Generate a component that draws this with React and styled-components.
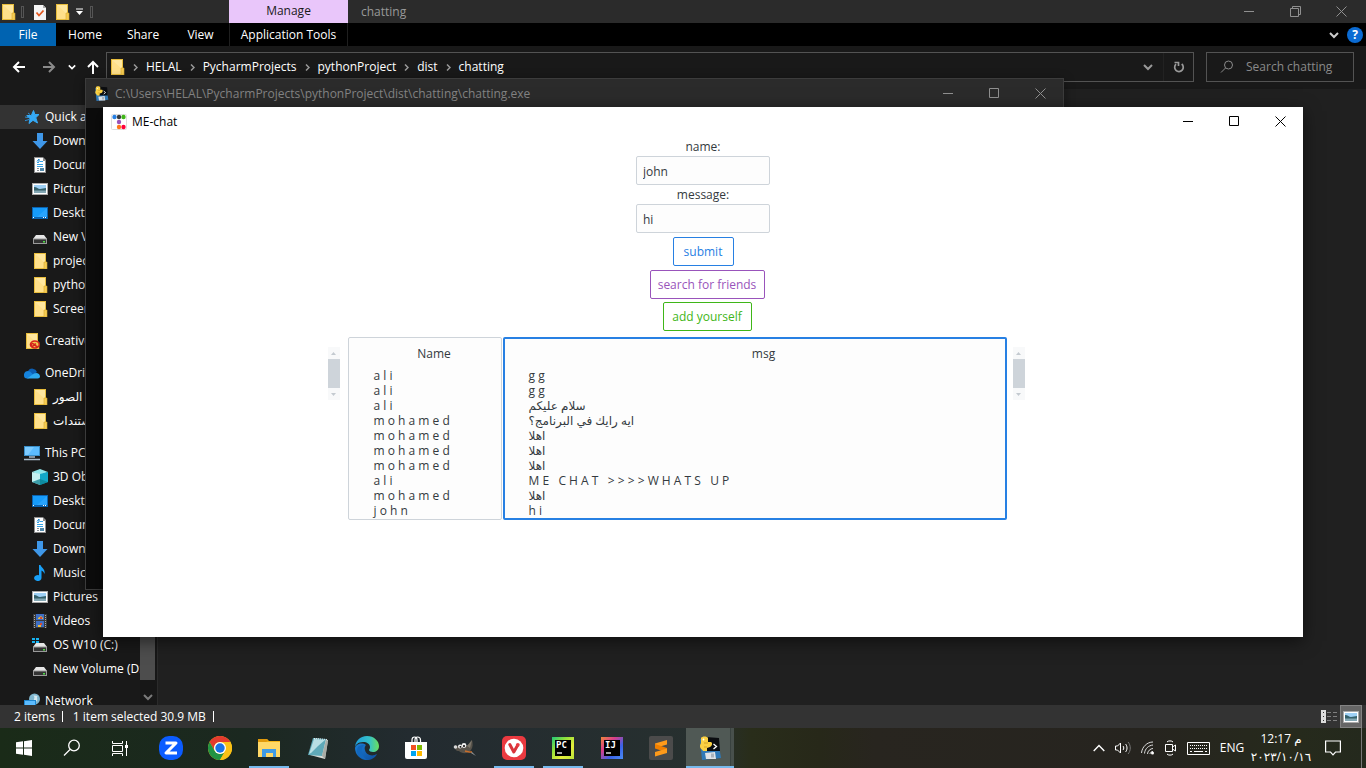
import React from "react";
import styled, { createGlobalStyle, css } from "styled-components";

const GlobalStyle = createGlobalStyle`
  *, *::before, *::after { box-sizing: border-box; }
  body { margin: 0; background: #202020; }
  body, button, input, table {
    font-family: "Open Sans", "Noto Sans", "DejaVu Sans", sans-serif;
    font-size: 12px;
    line-height: 16px;
  }
  button { margin: 0; padding: 0; border: 0; background: none; color: inherit; }
  svg { display: block; flex: none; }
`;

/* ---------- desktop ---------- */
const Desktop = styled.div`
  position: relative;
  display: flex;
  flex-direction: column;
  height: 100vh;
  overflow: hidden;
  color: #fff;
`;

/* ---------- shared window parts ---------- */
const CaptionButtons = styled.div`
  display: flex;
  align-self: stretch;
  margin-left: auto;
  padding-right: ${(p) => p.$inset || 0}px;
  color: ${(p) => p.$tone};
`;
const CaptionButton = styled.button`
  display: flex;
  align-items: center;
  justify-content: center;
  width: 46px;
`;

function Captions({ tone, inset, restore }) {
  return (
    <CaptionButtons $tone={tone} $inset={inset}>
      <CaptionButton aria-label="Minimize">
        <svg width="11" height="11" stroke="currentColor" fill="none"><path d="M0 5.5h10" /></svg>
      </CaptionButton>
      <CaptionButton aria-label={restore ? "Restore" : "Maximize"}>
        <svg width="11" height="11" stroke="currentColor" fill="none">
          {restore ? <path d="M.5 2.5h8v8h-8zM2.5 2.5v-2h8v8h-2" /> : <path d="M.5.5h9v9h-9z" />}
        </svg>
      </CaptionButton>
      <CaptionButton aria-label="Close">
        <svg width="11" height="11" stroke="currentColor" fill="none"><path d="M.5.5l10 10M10.5.5l-10 10" /></svg>
      </CaptionButton>
    </CaptionButtons>
  );
}

/* ---------- explorer ---------- */
const Explorer = styled.main`
  display: flex;
  flex: 1;
  flex-direction: column;
  min-height: 0;
`;
const TitleBar = styled.header`
  display: flex;
  align-items: center;
  height: 23px;
  background: #2b2b2b;
  color: #999;
`;
const QuickTools = styled.div`
  display: flex;
  align-items: center;
  gap: 5px;
  width: 229px;
`;
const ToolDivider = styled.span`
  width: 3px;
  height: 12px;
  border: 1px solid #555;
`;
const ManageTab = styled.div`
  width: 119px;
  height: 23px;
  margin-right: 13px;
  line-height: 21px;
  text-align: center;
  background: #e9c6fa;
  color: #1a1a1a;
`;
const Ribbon = styled.nav`
  display: flex;
  height: 23px;
  background: #000;
`;
const RibbonTab = styled.button`
  width: ${(p) => p.$width}px;
  color: #fff;
  ${(p) => p.$file && css`background: #0063b1;`}
  ${(p) => p.$tools && css`border: solid #1f1f1f; border-width: 0 1px;`}
`;
const RibbonEnd = styled.div`
  display: flex;
  align-items: center;
  gap: 8px;
  margin-left: auto;
  padding-right: 3px;
  color: #ccc;
`;
const Help = styled.button`
  width: 16px;
  height: 16px;
  border-radius: 50%;
  background: #0b6bd3;
  color: #fff;
  font-weight: 700;
`;
const AddressRow = styled.div`
  display: flex;
  align-items: flex-start;
  gap: 12px;
  height: 43px;
  padding: 6px 12px 0;
  background: #191919;
`;
const NavButtons = styled.div`
  display: flex;
  align-items: center;
  gap: 10px;
  width: 82px;
  height: 30px;
`;
const NavButton = styled.button`
  display: flex;
  color: ${(p) => (p.$dim ? "#8a8a8a" : "#fff")};
`;
const AddressBox = styled.div`
  display: flex;
  flex: 1;
  align-items: center;
  height: 30px;
  padding-left: 2px;
  border: 1px solid #535353;
`;
const Crumb = styled.button`
  color: #fff;
`;
const CrumbArrow = styled.span`
  display: flex;
  justify-content: center;
  width: 21px;
  color: #999;
`;
const AddressActions = styled.div`
  display: flex;
  align-self: stretch;
  align-items: center;
  margin-left: auto;
  color: #999;
`;
const AddressAction = styled.button`
  display: flex;
  align-items: center;
  justify-content: center;
  width: 30px;
  height: 28px;
  ${(p) => p.$divided && css`border-left: 1px solid #222;`}
`;
const SearchBox = styled.label`
  display: flex;
  align-items: center;
  gap: 12px;
  width: 148px;
  height: 30px;
  padding: 0 4px 0 13px;
  border: 1px solid #535353;
  color: #8a8a8a;
`;
const SearchInput = styled.input`
  flex: 1;
  min-width: 0;
  padding: 0;
  border: 0;
  outline: 0;
  background: transparent;
  &::placeholder { color: #8a8a8a; opacity: 1; }
`;
const ExplorerBody = styled.div`
  display: flex;
  flex: 1;
  min-height: 0;
  background: #202020;
`;
const Sidebar = styled.nav`
  display: flex;
  width: 158px;
  overflow: hidden;
  border-right: 1px solid #2b2b2b;
  background: #191919;
`;
const Tree = styled.div`
  display: flex;
  flex: 1;
  flex-direction: column;
  gap: 8px;
  min-width: 0;
  padding-top: 16px;
  overflow: hidden;
`;
const TreeGroup = styled.div`
  display: flex;
  flex-direction: column;
`;
const TreeItem = styled.a`
  display: flex;
  align-items: center;
  gap: 5px;
  height: 24px;
  padding-left: ${(p) => (p.$nested ? 32 : 24)}px;
  color: #fff;
  text-decoration: none;
  white-space: nowrap;
  ${(p) => p.$active && css`background: #333;`}
`;
const SideScroll = styled.div`
  display: flex;
  flex-direction: column;
  align-items: center;
  width: 17px;
  padding: 16px 2px 3px 0;
  background: #171717;
  color: #7a7a7a;
`;
const SideThumb = styled.div`
  flex: 1;
  width: 15px;
  margin-bottom: 12px;
  background: #4d4d4d;
`;
const StatusBar = styled.footer`
  display: flex;
  align-items: center;
  height: 23px;
  padding: 0 4px 0 14px;
  background: #333;
`;
const StatusText = styled.span`
  padding-right: ${(p) => p.$after}px;
`;
const StatusDivider = styled.span`
  width: 1px;
  height: 11px;
  margin-right: 10px;
  background: #fff;
`;
const ViewModes = styled.div`
  display: flex;
  align-items: center;
  align-self: stretch;
  gap: 3px;
  margin-left: auto;
`;
const ViewMode = styled.button`
  display: flex;
  align-items: center;
  justify-content: center;
  height: 23px;
  ${(p) => p.$on && css`width: 22px; border: 1px solid #838383; background: #666;`}
`;

/* ---------- icons ---------- */
const Folder = ({ badge }) => (
  <svg width="16" height="16" viewBox="0 0 16 16">
    <path d="M2 0h12v16H2z" fill="#e8bd3c" />
    <path d="M3 1h10v14H3z" fill="#ffe08a" />
    <path d="M3 1l10 9V1z" fill="#ffe79f" />
    <path d="M12 9h3v7h-3z" fill="#f5cc53" stroke="#d9a92b" strokeWidth=".6" />
    {badge && (
      <g fill="none" stroke="#d8221c" strokeWidth="1.5">
        <ellipse cx="10.8" cy="11.5" rx="4.4" ry="3.5" fill="#f0c94f" />
        <path d="M13.8 13.4c-3 .8-3.400-3.600-5.700-2.900-1.800.8-.8 3.300.8 2.500l3-2.300" />
      </g>
    )}
  </svg>
);
const Star = () => (
  <svg width="16" height="16" viewBox="0 0 16 16">
    <path d="M9.500 1.500l1.400 4H15l-3.200 3.200L13.500 14l-4.500-2.700L5 14.500l1-4.700-3.200-3.300h4.500z" fill="#35a9f5" stroke="#35a9f5" strokeLinejoin="round" />
    <path d="M4 8.500L1 8M5 10.500l-4 1.200M6 5.500L4 4" stroke="#2b8fd6" />
  </svg>
);
const Download = () => (
  <svg width="16" height="16" viewBox="0 0 16 16"><path d="M5 0h6v8h4.500L8 16 .5 8H5z" fill="#3f97e8" /></svg>
);
const DocumentIcon = () => (
  <svg width="16" height="16" viewBox="0 0 16 16">
    <path d="M2 0h9l3 3v13H2z" fill="#8f8f8f" />
    <path d="M3 1h8v3h2v11H3z" fill="#fff" />
    <path d="M5 5.500h2M8 4.500h3M5 7.500h6M5 9.500h6" stroke="#36a3e6" />
    <path d="M5 11.500h2M5 13.500h2" stroke="#8a8f94" />
    <path d="M5 4.500L7 2v3" stroke="#1787d4" fill="none" />
    <path d="M8 11h4v3H8z" fill="#5187a8" />
  </svg>
);
const Picture = () => (
  <svg width="16" height="16" viewBox="0 0 16 16">
    <path d="M0 2h16v12H0z" fill="#a9a9a9" />
    <path d="M1 3h14v10H1z" fill="#fff" />
    <path d="M2 4h12v8H2z" fill="#9ed0f5" />
    <path d="M2 6c3 0 4 2 6 2s4-1 6-1v3H2z" fill="#35616b" />
    <path d="M2 9.500h12V12H2z" fill="#84a8b4" />
  </svg>
);
const DesktopIcon = () => (
  <svg width="16" height="16" viewBox="0 0 16 16">
    <path d="M0 2h16v12H0z" fill="#0a63b0" />
    <path d="M1 3h14v9H1z" fill="#169bfa" />
    <path d="M15 3v9H5z" fill="#3baeff" opacity=".5" />
    <path d="M1 12.500h1M11 12.500h1M13 12.500h1" stroke="#fff" />
  </svg>
);
const Drive = ({ windows }) => (
  <svg width="16" height="16" viewBox="0 0 16 16">
    <path d="M4 6h8l3 4H1z" fill="#e6e6e6" />
    <path d="M1 9.500h14V15H1z" fill="#9a9a9a" />
    <path d="M2 10.500h12V14H2z" fill="#333" />
    <path d="M11 12h2v1.500h-2z" fill="#4fdc46" />
    {windows && <path d="M0 1h3v2H0zM4 1h3v2H4zM0 4h3v2H0zM4 4h3v2H4z" fill="#16b2f0" />}
  </svg>
);
const Cloud = () => (
  <svg width="16" height="16" viewBox="0 0 16 16">
    <path d="M4 6a5 5 0 0 1 9 1l-6 5z" fill="#0c5fb4" />
    <path d="M0 10.500a4 4 0 0 1 6-4l4 4-6 3H3a3 3 0 0 1-3-3z" fill="#1583dd" />
    <path d="M3 13.500l7-5a4 4 0 0 1 6 2.500 2.500 2.500 0 0 1-2.500 2.500z" fill="#2eaaf0" />
  </svg>
);
const PcIcon = () => (
  <svg width="16" height="16" viewBox="0 0 16 16">
    <path d="M0 1h16v10H0z" fill="#3a8fc9" />
    <path d="M1 2h14v8H1z" fill="#5cbcff" />
    <path d="M1 2h9l-6 8H1z" fill="#7dcbff" />
    <path d="M5 12h6M0 14.500h16" stroke="#a9bccb" strokeWidth="1.500" />
  </svg>
);
const Cube = () => (
  <svg width="16" height="16" viewBox="0 0 16 16">
    <path d="M8 0l8 3-8 3-8-3z" fill="#8fe6ea" />
    <path d="M0 3l8 2v11l-8-3z" fill="#c4f0f0" />
    <path d="M8 5l8-2v10l-8 3z" fill="#12a8c8" />
    <path d="M0 13l8-3 8 3-8 3z" fill="#0d8292" opacity=".75" />
  </svg>
);
const Note = () => (
  <svg width="16" height="16" viewBox="0 0 16 16">
    <path d="M7 0h1.500c1 3 5 4 4 9-.5-2-2-3-3-3.500V13A3.700 3 0 1 1 7 10.200z" fill="#18a0f8" />
  </svg>
);
const Film = () => (
  <svg width="16" height="16" viewBox="0 0 16 16">
    <path d="M1 1h14v14H1z" fill="#3a3a3a" />
    <path d="M4 1h8v6H4zM4 8h8v6H4z" fill="#3f6fc4" />
    <path d="M6 5l3-2 2 2v1H6zM6 12h3v2H6z" fill="#e6b93c" />
    <path d="M8 4h2v2H8zM8 10h2v2H8z" fill="#d84932" />
    <path d="M2.500 2v13M13.500 2v13" stroke="#aaa" strokeDasharray="1 1" />
  </svg>
);
const NetworkIcon = () => (
  <svg width="16" height="16" viewBox="0 0 16 16">
    <circle cx="10.500" cy="6" r="5.500" fill="#7fb6cf" />
    <path d="M7 2c3 0 4 2 3 4s2 3 3 2-1-5 1-5" fill="#d5e8ef" />
    <path d="M0 7h12v8H0z" fill="#1d86d0" />
    <path d="M1 8h10v6H1z" fill="#5cbcff" />
  </svg>
);
const ChevronDown = ({ size = 10, width = 2 }) => (
  <svg width={size} height={size} viewBox="0 0 10 10" fill="none" stroke="currentColor" strokeWidth={width}>
    <path d="M1 3l4 4 4-4" />
  </svg>
);
const PythonDisk = ({ size }) => (
  <svg width={size} height={size} viewBox="0 0 22 24">
    <path d="M1 3l18 1 3 18-19 2z" fill="#2f79b8" />
    <path d="M7 1l13 1 1 13H7z" fill="#0b0d10" />
    <path d="M6 17l10-1 1 7H7z" fill="#dfe3e8" />
    <path d="M12 17.500h3v4h-3z" fill="#aab3bd" />
    <path d="M14.500 8l3 2.500-3 2.500" stroke="#fff" strokeWidth="1.300" fill="none" />
    <path d="M2 2c1-2 6-2 7 0v4h3c2 1 1 4-1 5l-3 1v3H4c-1-2-3-2-3-5 0-2 1-2 1-3z" fill="#fbd143" />
    <path d="M5 7h4M5 11h3" stroke="#c9971c" strokeWidth=".8" />
    <circle cx="4.500" cy="3.500" r=".9" fill="#fff" />
  </svg>
);

const TREE = [
  [["Quick access", Star], ["Downloads", Download], ["Documents", DocumentIcon], ["Pictures", Picture],
    ["Desktop", DesktopIcon], ["New Volume", Drive], ["projects", Folder], ["python", Folder], ["Screenshots", Folder]],
  [["Creative Cloud", (p) => <Folder badge {...p} />]],
  [["OneDrive", Cloud], ["الصور", Folder], ["المستندات", Folder]],
  [["This PC", PcIcon], ["3D Objects", Cube], ["Desktop", DesktopIcon], ["Documents", DocumentIcon],
    ["Downloads", Download], ["Music", Note], ["Pictures", Picture], ["Videos", Film],
    ["OS W10 (C:)", (p) => <Drive windows {...p} />], ["New Volume (D:)", Drive]],
  [["Network", NetworkIcon]],
];
const PATH = ["HELAL", "PycharmProjects", "pythonProject", "dist", "chatting"];

/* ---------- floating windows ---------- */
const ConsoleWindow = styled.section`
  position: absolute;
  inset: 78px 302px 178px 85px;
  border: 1px solid #3c3c3c;
  background: #0c0c0c;
  box-shadow: 0 2px 10px rgba(0, 0, 0, 0.4);
`;
const ConsoleTitle = styled.header`
  display: flex;
  align-items: center;
  gap: 6px;
  height: 29px;
  padding-left: 8px;
  background: #2b2b2b;
  color: #838383;
`;
const ChatWindow = styled.section`
  position: absolute;
  inset: 107px 63px 131px 103px;
  display: flex;
  flex-direction: column;
  background: #fff;
  color: #343a40;
  box-shadow: 0 4px 16px rgba(0, 0, 0, 0.55);
`;
const ChatTitle = styled.header`
  display: flex;
  align-items: center;
  gap: 5px;
  height: 29px;
  padding-left: 8px;
  color: #000;
`;
const ChatForm = styled.form`
  display: flex;
  flex-direction: column;
  align-items: center;
  padding-top: 1px;
`;
const FieldLabel = styled.label`
  line-height: 19px;
`;
const Field = styled.input`
  width: 134px;
  height: 29px;
  padding: 1px 6px 0;
  border: 1px solid #ced4da;
  border-radius: 2px;
  background: #fdfdfd;
  color: #343a40;
`;
const Actions = styled.div`
  display: flex;
  flex-direction: column;
  align-items: center;
  gap: 3px;
  padding: ${(p) => (p.$shifted ? "4px 0 6px 8px" : "4px 0 0")};
`;
const ActionButton = styled.button`
  width: ${(p) => p.$width}px;
  height: 29px;
  padding-top: 1px;
  border: 1px solid ${(p) => p.$tone};
  border-radius: 2px;
  color: ${(p) => p.$tone};
`;
const Log = styled.div`
  display: flex;
  align-items: flex-start;
  justify-content: center;
  padding-right: 54px;
`;
const LogPanel = styled.div`
  width: ${(p) => p.$width}px;
  height: 183px;
  margin-right: ${(p) => p.$after}px;
  padding: ${(p) => (p.$focused ? "6px 0 0 18px" : "7px 0 0 19px")};
  overflow: hidden;
  border: ${(p) => (p.$focused ? "2px solid #2780e3" : "1px solid #ced4da")};
  border-radius: 2px;
  background: #fdfdfd;
`;
const LogTable = styled.table`
  width: 100%;
  border-collapse: collapse;
  th { height: 23px; padding: 0; font-weight: 400; line-height: 18px; vertical-align: top; }
  td { height: 15px; padding: 0 0 0 6px; line-height: 15px; white-space: pre; }
`;
const MiniScroll = styled.div`
  display: flex;
  flex-direction: column;
  width: 12px;
  margin: 10px ${(p) => p.$after}px 0 0;
  background: #f8f9fa;
`;
const MiniArrow = styled.button`
  display: flex;
  align-items: center;
  justify-content: center;
  height: 12px;
`;
const MiniThumb = styled.div`
  height: 29px;
  background: #ced4da;
`;

function Scroller({ after }) {
  return (
    <MiniScroll $after={after}>
      <MiniArrow type="button" aria-label="Scroll up"><svg width="5" height="3"><path d="M0 3L2.500 0 5 3z" fill="#c4cad0" /></svg></MiniArrow>
      <MiniThumb />
      <MiniArrow type="button" aria-label="Scroll down"><svg width="5" height="3"><path d="M0 0h5L2.500 3z" fill="#c4cad0" /></svg></MiniArrow>
    </MiniScroll>
  );
}

const NAMES = ["a l i", "a l i", "a l i", "m o h a m e d", "m o h a m e d", "m o h a m e d", "m o h a m e d", "a l i", "m o h a m e d", "j o h n"];
const MESSAGES = ["g g", "g g", "سلام عليكم", "ايه رايك في البرنامج؟", "اهلا", "اهلا", "اهلا", "M E   C H A T   > > > > W H A T S   U P", "اهلا", "h i"];

function LogColumn({ title, rows, ...panel }) {
  return (
    <LogPanel {...panel}>
      <LogTable>
        <thead><tr><th scope="col">{title}</th></tr></thead>
        <tbody>{rows.map((row, i) => <tr key={i}><td><bdi>{row}</bdi></td></tr>)}</tbody>
      </LogTable>
    </LogPanel>
  );
}

/* ---------- taskbar ---------- */
const Taskbar = styled.footer`
  display: flex;
  height: 40px;
  background: linear-gradient(90deg, #1a2b18 0%, #1b2820 18%, #232b30 30%, #27302f 52%, #292d1a 55%, #272819 60%, #28251f 64%, #26241f 84%, #262a1c 95%, #24291d 100%);
`;
const SystemButtons = styled.div`
  display: flex;
  padding-right: 3px;
`;
const Apps = styled.div`
  display: flex;
  gap: 1px;
`;
const TaskButton = styled.button`
  position: relative;
  display: flex;
  align-items: center;
  justify-content: center;
  width: 48px;
  height: 40px;
  ${(p) => p.$active && css`background: linear-gradient(90deg, #505955 0 44px, #39423f 44px 45px, #48504c 45px);`}
  ${(p) => (p.$open || p.$active) && css`
    &::after {
      content: "";
      position: absolute;
      bottom: 0;
      left: ${p.$active ? 0 : 4}px;
      right: ${p.$active ? 0 : 4}px;
      height: 2px;
      background: #76b9ed;
    }
  `}
`;
const Tray = styled.div`
  display: flex;
  align-items: center;
  margin-left: auto;
  padding-right: 4px;
`;
const TrayButton = styled.button`
  display: flex;
  align-items: center;
  justify-content: center;
  width: ${(p) => p.$width}px;
  height: 40px;
`;
const Clock = styled.button`
  width: 64px;
  line-height: 18px;
  text-align: center;
`;
const ShowDesktop = styled.button`
  width: 1px;
  height: 40px;
  margin-left: 8px;
  background: #777;
`;

const Zoom = () => (
  <svg width="24" height="24" viewBox="0 0 24 24">
    <rect width="24" height="24" rx="10" fill="#0b5cff" />
    <path d="M6.500 7h10.500L7 17h11" fill="none" stroke="#fff" strokeWidth="3" strokeLinejoin="round" />
  </svg>
);
const Chrome = () => (
  <svg width="24" height="24" viewBox="0 0 24 24">
    <circle cx="12" cy="12" r="12" fill="#fbc116" />
    <path d="M1.600 6A12 12 0 0 1 22.400 6H12a6 6 0 0 0-5.200 9z" fill="#e33b2e" />
    <path d="M1.600 6l5.200 9A6 6 0 0 0 12 18l-.8 6A12 12 0 0 1 1.600 6z" fill="#229343" />
    <path d="M6.800 15A6 6 0 0 0 17.200 15L12 24A12 12 0 0 1 4 21z" fill="#229343" />
    <path d="M12 6h10.400A12 12 0 0 1 12 24l5.200-9z" fill="#fbc116" />
    <circle cx="12" cy="12" r="6" fill="#fff" />
    <circle cx="12" cy="12" r="4.700" fill="#1a73e8" />
  </svg>
);
const Files = () => (
  <svg width="22" height="20" viewBox="0 0 22 20">
    <path d="M0 1h9l2 2h11v16H0z" fill="#f5b518" />
    <path d="M0 4h22v15H0z" fill="#ffd867" />
    <path d="M0 1h9l1 2-2 1H0z" fill="#e19a0c" />
    <path d="M4 11h14v8h-3v-4H8v4H4z" fill="#3f9be5" />
  </svg>
);
const Notepad = () => (
  <svg width="24" height="24" viewBox="0 0 24 24">
    <path d="M8 2l14 2-3 19-15-4z" fill="#d9dcd8" />
    <path d="M7 2l13 1-4 17-14-1z" fill="#5fa9b8" />
    <path d="M8 3l11 1-7 6-7 7-2 1z" fill="#b9dfe4" />
    <path d="M16 20l4-16 2 1-3 18z" fill="#a8aca6" />
    <path d="M8 2.500l13 1" stroke="#eee" strokeDasharray="1 1" />
  </svg>
);
const Edge = () => (
  <svg width="24" height="24" viewBox="0 0 24 24">
    <defs>
      <linearGradient id="edgeTop" x1="0" x2="1"><stop offset="0" stopColor="#1f9fdf" /><stop offset=".6" stopColor="#35c1c8" /><stop offset="1" stopColor="#6be05c" /></linearGradient>
      <linearGradient id="edgeLow" x1="0" x2="1" y2="1"><stop offset="0" stopColor="#1b7fd6" /><stop offset="1" stopColor="#0d4c9c" /></linearGradient>
    </defs>
    <path d="M0 12A12 12 0 0 0 12 24c4 0 8-2 10-6-5 3-11 1-12-4-1-3 1-5 1-5C7 6 1 8 0 12z" fill="url(#edgeLow)" />
    <path d="M0 12C0 5 5 0 12 0s12 5 12 10c0 4-3 6-6 6-2 0-4-1-4-2s1-1 1-3c0-3-3-5-7-5-5 0-8 3-8 6z" fill="url(#edgeTop)" />
    <path d="M9 9c-5 6-1 13 4 15C4 24-1 15 4 10c2-1 4-1 5-1z" fill="#1267bd" />
  </svg>
);
const Store = () => (
  <svg width="24" height="24" viewBox="0 0 24 24">
    <path d="M8 7V4c0-2 1-3 2.500-3S13 2 13 4v3M11 6V4c0-2 1-3 2.500-3S16.500 2 16.500 4v3" fill="none" stroke="#fff" strokeWidth="1.200" />
    <path d="M1 6h22v15a2 2 0 0 1-2 2H3a2 2 0 0 1-2-2z" fill="#fff" />
    <path d="M7 9h5v5H7z" fill="#f25022" /><path d="M13 9h5v5h-5z" fill="#7fba00" />
    <path d="M7 15h5v5H7z" fill="#00a4ef" /><path d="M13 15h5v5h-5z" fill="#ffb900" />
  </svg>
);
const Gimp = () => (
  <svg width="24" height="24" viewBox="0 0 24 24">
    <path d="M2 9l4 2 3-3 5 2 5-6c1 4 1 7-1 10-3 4-9 4-12 1-3 0-5-2-4-6z" fill="#57524a" />
    <path d="M14 10l5-6-2 8z" fill="#7d776b" />
    <circle cx="7" cy="10.500" r="2" fill="#eee" /><circle cx="11" cy="9.500" r="2.400" fill="#eee" />
    <circle cx="7.400" cy="10.800" r=".9" /><circle cx="11" cy="10" r="1" />
    <circle cx="2.500" cy="11" r="1.800" fill="#d6d6d6" />
    <path d="M12 15l4 1h3" fill="none" stroke="#c96f2c" strokeWidth="1.500" />
    <path d="M19 16l4 4-5-3z" fill="#999" />
  </svg>
);
const Vivaldi = () => (
  <svg width="24" height="24" viewBox="0 0 24 24">
    <rect width="24" height="24" rx="5" fill="#ea3a40" />
    <circle cx="12" cy="12" r="9.300" fill="#fff" />
    <path d="M7.800 8.500l4 7.500 3.700-6.500" fill="none" stroke="#d9343a" strokeWidth="3" strokeLinecap="round" strokeLinejoin="round" />
    <circle cx="15.800" cy="8.800" r="1.900" fill="#ea3a40" />
  </svg>
);
const JetBrains = ({ id, letters, stops }) => (
  <svg width="22" height="22" viewBox="0 0 22 22">
    <defs>
      <linearGradient id={id} x1="0" y1="0" x2="1" y2="1">
        {stops.map((c, i) => <stop key={c} offset={i / (stops.length - 1)} stopColor={c} />)}
      </linearGradient>
    </defs>
    <path d="M0 0h22v22H0z" fill={`url(#${id})`} />
    <path d="M3 3h16v16H3z" fill="#000" />
    <text x="4" y="11" fill="#fff" fontFamily="DejaVu Sans Mono" fontSize="9" fontWeight="700">{letters}</text>
    <path d="M5 16h5" stroke="#ddd" strokeWidth="1.500" />
  </svg>
);
const Sublime = () => (
  <svg width="24" height="24" viewBox="0 0 24 24">
    <rect width="24" height="24" rx="2" fill="#4b4b4b" />
    <path d="M6 7.500L18 4v4.500L6 12z" fill="#ff9a1a" />
    <path d="M6 8l12 4v4.500L6 12.500z" fill="#f07f00" />
    <path d="M6 16l12-3.500V17L6 20.500z" fill="#ff9a1a" />
  </svg>
);
const APPS = [
  ["Zoom", <Zoom />],
  ["Chrome", <Chrome />],
  ["File Explorer", <Files />, "open"],
  ["Notepad", <Notepad />],
  ["Edge", <Edge />],
  ["Microsoft Store", <Store />],
  ["GIMP", <Gimp />],
  ["Vivaldi", <Vivaldi />, "open"],
  ["PyCharm", <JetBrains id="pc" letters="PC" stops={["#20c77a", "#8fe03b", "#e6ee3b", "#b9e53a"]} />, "open"],
  ["IntelliJ IDEA", <JetBrains id="ij" letters="IJ" stops={["#f0873a", "#d83d8a", "#3a62e8", "#4b8df5"]} />],
  ["Sublime Text", <Sublime />],
  ["Python", <PythonDisk size={24} />, "active"],
];

export default function App() {
  return (
    <Desktop>
      <GlobalStyle />
      <Explorer>
        <TitleBar>
          <QuickTools>
            <Folder />
            <ToolDivider />
            <svg width="20" height="16" viewBox="0 0 20 16">
              <path d="M5 1h9l3 3v12H5z" fill="#f4f4f4" /><path d="M14 1v3h3z" fill="#aaa" />
              <path d="M7.500 8.500l2.500 3 4.500-5" fill="none" stroke="#e2571e" strokeWidth="1.800" />
            </svg>
            <Folder />
            <svg width="10" height="8"><path d="M1 1h7" stroke="#fff" /><path d="M1 3h7L4.500 7z" fill="#fff" /></svg>
            <ToolDivider />
          </QuickTools>
          <ManageTab>Manage</ManageTab>
          <span>chatting</span>
          <Captions tone="#909090" inset={2} restore />
        </TitleBar>
        <Ribbon>
          <RibbonTab $width={56} $file>File</RibbonTab>
          <RibbonTab $width={58}>Home</RibbonTab>
          <RibbonTab $width={58}>Share</RibbonTab>
          <RibbonTab $width={57}>View</RibbonTab>
          <RibbonTab $width={119} $tools>Application Tools</RibbonTab>
          <RibbonEnd><ChevronDown /><Help aria-label="Help">?</Help></RibbonEnd>
        </Ribbon>
        <AddressRow>
          <NavButtons>
            <NavButton aria-label="Back"><svg width="14" height="14" fill="none" stroke="currentColor" strokeWidth="2"><path d="M13 7H2M7 2L2 7l5 5" /></svg></NavButton>
            <NavButton $dim aria-label="Forward"><svg width="22" height="14" fill="none" stroke="currentColor" strokeWidth="2"><path d="M7 7h11M13 2l5 5-5 5" /></svg></NavButton>
            <NavButton aria-label="Recent locations"><ChevronDown size={8} /></NavButton>
            <NavButton aria-label="Up"><svg width="14" height="14" fill="none" stroke="currentColor" strokeWidth="2"><path d="M7 14V2M2 7l5-5 5 5" /></svg></NavButton>
          </NavButtons>
          <AddressBox>
            <Folder />
            {PATH.map((part) => (
              <React.Fragment key={part}>
                <CrumbArrow><svg width="5" height="7" fill="none" stroke="currentColor" strokeWidth="1.500"><path d="M1 .5l3 3-3 3" /></svg></CrumbArrow>
                <Crumb>{part}</Crumb>
              </React.Fragment>
            ))}
            <AddressActions>
              <AddressAction aria-label="Previous locations"><ChevronDown /></AddressAction>
              <AddressAction $divided aria-label="Refresh">
                <svg width="12" height="12" fill="none" stroke="currentColor" strokeWidth="1.700"><path d="M3 3.200A4.300 4.300 0 1 0 8.700 3M1.500 1.500h4v3.500" /></svg>
              </AddressAction>
            </AddressActions>
          </AddressBox>
          <SearchBox>
            <svg width="14" height="14" fill="none" stroke="currentColor"><circle cx="8.500" cy="5" r="4" /><path d="M5.500 8L1 12.500" /></svg>
            <SearchInput aria-label="Search chatting" placeholder="Search chatting" />
          </SearchBox>
        </AddressRow>
        <ExplorerBody>
          <Sidebar>
            <Tree>
              {TREE.map((group, g) => (
                <TreeGroup key={g}>
                  {group.map(([label, Icon], i) => (
                    <TreeItem key={i} href="#" $nested={i > 0} $active={g === 0 && i === 0}><Icon />{label}</TreeItem>
                  ))}
                </TreeGroup>
              ))}
            </Tree>
            <SideScroll><SideThumb /><ChevronDown /></SideScroll>
          </Sidebar>
        </ExplorerBody>
        <StatusBar>
          <StatusText $after={7}>2 items</StatusText>
          <StatusDivider />
          <StatusText $after={3}>1 item selected</StatusText>
          <StatusText $after={7}>30.9 MB</StatusText>
          <StatusDivider />
          <ViewModes>
            <ViewMode aria-label="Details">
              <svg width="16" height="13" fill="none"><path d="M0 0h5v13H0z" fill="#ddd" /><path d="M2 2.500h1M2 6.500h1M2 10.500h1" stroke="#333" /><path d="M6 2.500h4M12 2.500h4M6 6.500h4M12 6.500h4M6 10.500h4M12 10.500h4" stroke="#808080" /></svg>
            </ViewMode>
            <ViewMode $on aria-label="Large icons"><Picture /></ViewMode>
          </ViewModes>
        </StatusBar>
      </Explorer>

      <ConsoleWindow>
        <ConsoleTitle>
          <PythonDisk size={15} />
          <span>C:\Users\HELAL\PycharmProjects\pythonProject\dist\chatting\chatting.exe</span>
          <Captions tone="#909090" />
        </ConsoleTitle>
      </ConsoleWindow>

      <ChatWindow>
        <ChatTitle>
          <svg width="16" height="16" viewBox="0 0 16 16">
            <rect x=".5" y=".5" width="15" height="15" rx="1" fill="#fff" stroke="#ddd" />
            <circle cx="3.500" cy="3" r="2.200" fill="#2780e3" /><circle cx="8" cy="3" r="2.200" fill="#373a3c" />
            <circle cx="12.500" cy="3" r="2.200" fill="#3fb618" /><circle cx="8" cy="8" r="2.200" fill="#9954bb" />
            <circle cx="8" cy="13" r="2.200" fill="#ff7518" /><circle cx="12.500" cy="13" r="2.200" fill="#ff0039" />
          </svg>
          <span>ME-chat</span>
          <Captions tone="#000" />
        </ChatTitle>
        <ChatForm onSubmit={(e) => e.preventDefault()}>
          <FieldLabel htmlFor="name">name:</FieldLabel>
          <Field id="name" defaultValue="john" />
          <FieldLabel htmlFor="message">message:</FieldLabel>
          <Field id="message" defaultValue="hi" />
          <Actions>
            <ActionButton $width={61} $tone="#2780e3">submit</ActionButton>
          </Actions>
          <Actions $shifted>
            <ActionButton type="button" $width={115} $tone="#9954bb">search for friends</ActionButton>
            <ActionButton type="button" $width={89} $tone="#3fb618">add yourself</ActionButton>
          </Actions>
        </ChatForm>
        <Log>
          <Scroller after={8} />
          <LogColumn title="Name" rows={NAMES} $width={154} $after={1} />
          <LogColumn title="msg" rows={MESSAGES} $width={504} $after={6} $focused />
          <Scroller after={0} />
        </Log>
      </ChatWindow>

      <Taskbar>
        <SystemButtons>
          <TaskButton aria-label="Start">
            <svg width="16" height="16"><path d="M0 2.300L7 1.300V7.500H0zM8 1.200L16 0v7.500H8zM0 8.500h7v6.200l-7-1zM8 8.500h8V16l-8-1.200z" fill="#fff" /></svg>
          </TaskButton>
          <TaskButton aria-label="Search">
            <svg width="18" height="18" fill="none" stroke="#fff" strokeWidth="1.300"><circle cx="11" cy="6.500" r="5.300" /><path d="M7 10.500L1 16.500" /></svg>
          </TaskButton>
          <TaskButton aria-label="Task view">
            <svg width="18" height="17" fill="none" stroke="#fff"><path d="M1.500 1v2.500h10V1M1.500 5.500h10v6h-10zM1.500 16v-2.500h10V16M15.500 1v15" /><path d="M14 5h3v3h-3z" fill="#fff" stroke="none" /></svg>
          </TaskButton>
        </SystemButtons>
        <Apps>
          {APPS.map(([label, icon, state]) => (
            <TaskButton key={label} aria-label={label} $open={state === "open"} $active={state === "active"}>{icon}</TaskButton>
          ))}
        </Apps>
        <Tray>
          <TrayButton $width={24} aria-label="Show hidden icons">
            <svg width="12" height="8" fill="none" stroke="#fff" strokeWidth="1.400"><path d="M.7 7L6 1.500 11.300 7" /></svg>
          </TrayButton>
          <TrayButton $width={24} aria-label="Volume">
            <svg width="17" height="14" fill="none" stroke="#fff"><path d="M.5 5h2l3-3v10l-3-3h-2zM8 5c1 1 1 3 0 4M10.500 3c2 2 2 6 0 8" /><path d="M13 1c3 3 3 9 0 12" stroke="#777" /></svg>
          </TrayButton>
          <TrayButton $width={26} aria-label="Network">
            <svg width="14" height="14" fill="none" stroke="#ddd"><path d="M.5 12C1 6 6 1 12 1M3.500 12.500c.5-5 4-8 8.500-8.500M6.500 13c0-3 3-5.500 5.500-5.500M9 13c0-1 1-2.500 3-2.500" /><circle cx="11.500" cy="12" r="1.500" fill="#fff" stroke="none" /></svg>
          </TrayButton>
          <TrayButton $width={20} aria-label="Meet now">
            <svg width="12" height="16" fill="none" stroke="#fff"><path d="M.5 4.500h7v7h-7zM7.500 7l3-2v6l-3-2M2 2c1-1.500 5-1.500 6 0M2 14c1 1.500 5 1.500 6 0" /></svg>
          </TrayButton>
          <TrayButton $width={34} aria-label="Touch keyboard">
            <svg width="23" height="13" fill="none" stroke="#fff"><path d="M.5.500h22v12H.5z" /><path d="M3 3.500h17M3 6.500h17" strokeDasharray="1 1" /><path d="M3 9.500h2M7 9.500h9M18 9.500h2" /></svg>
          </TrayButton>
          <TrayButton $width={34}>ENG</TrayButton>
          <Clock><div>12:17 م</div><div>٢٠٢٣/١٠/١٦</div></Clock>
          <TrayButton $width={40} aria-label="Notifications">
            <svg width="16" height="16" fill="none" stroke="#fff" strokeWidth="1.200"><path d="M.6 1h14.800v11H10.500L8 14.800 5.500 12H.6z" /></svg>
          </TrayButton>
          <ShowDesktop aria-label="Show desktop" />
        </Tray>
      </Taskbar>
    </Desktop>
  );
}
